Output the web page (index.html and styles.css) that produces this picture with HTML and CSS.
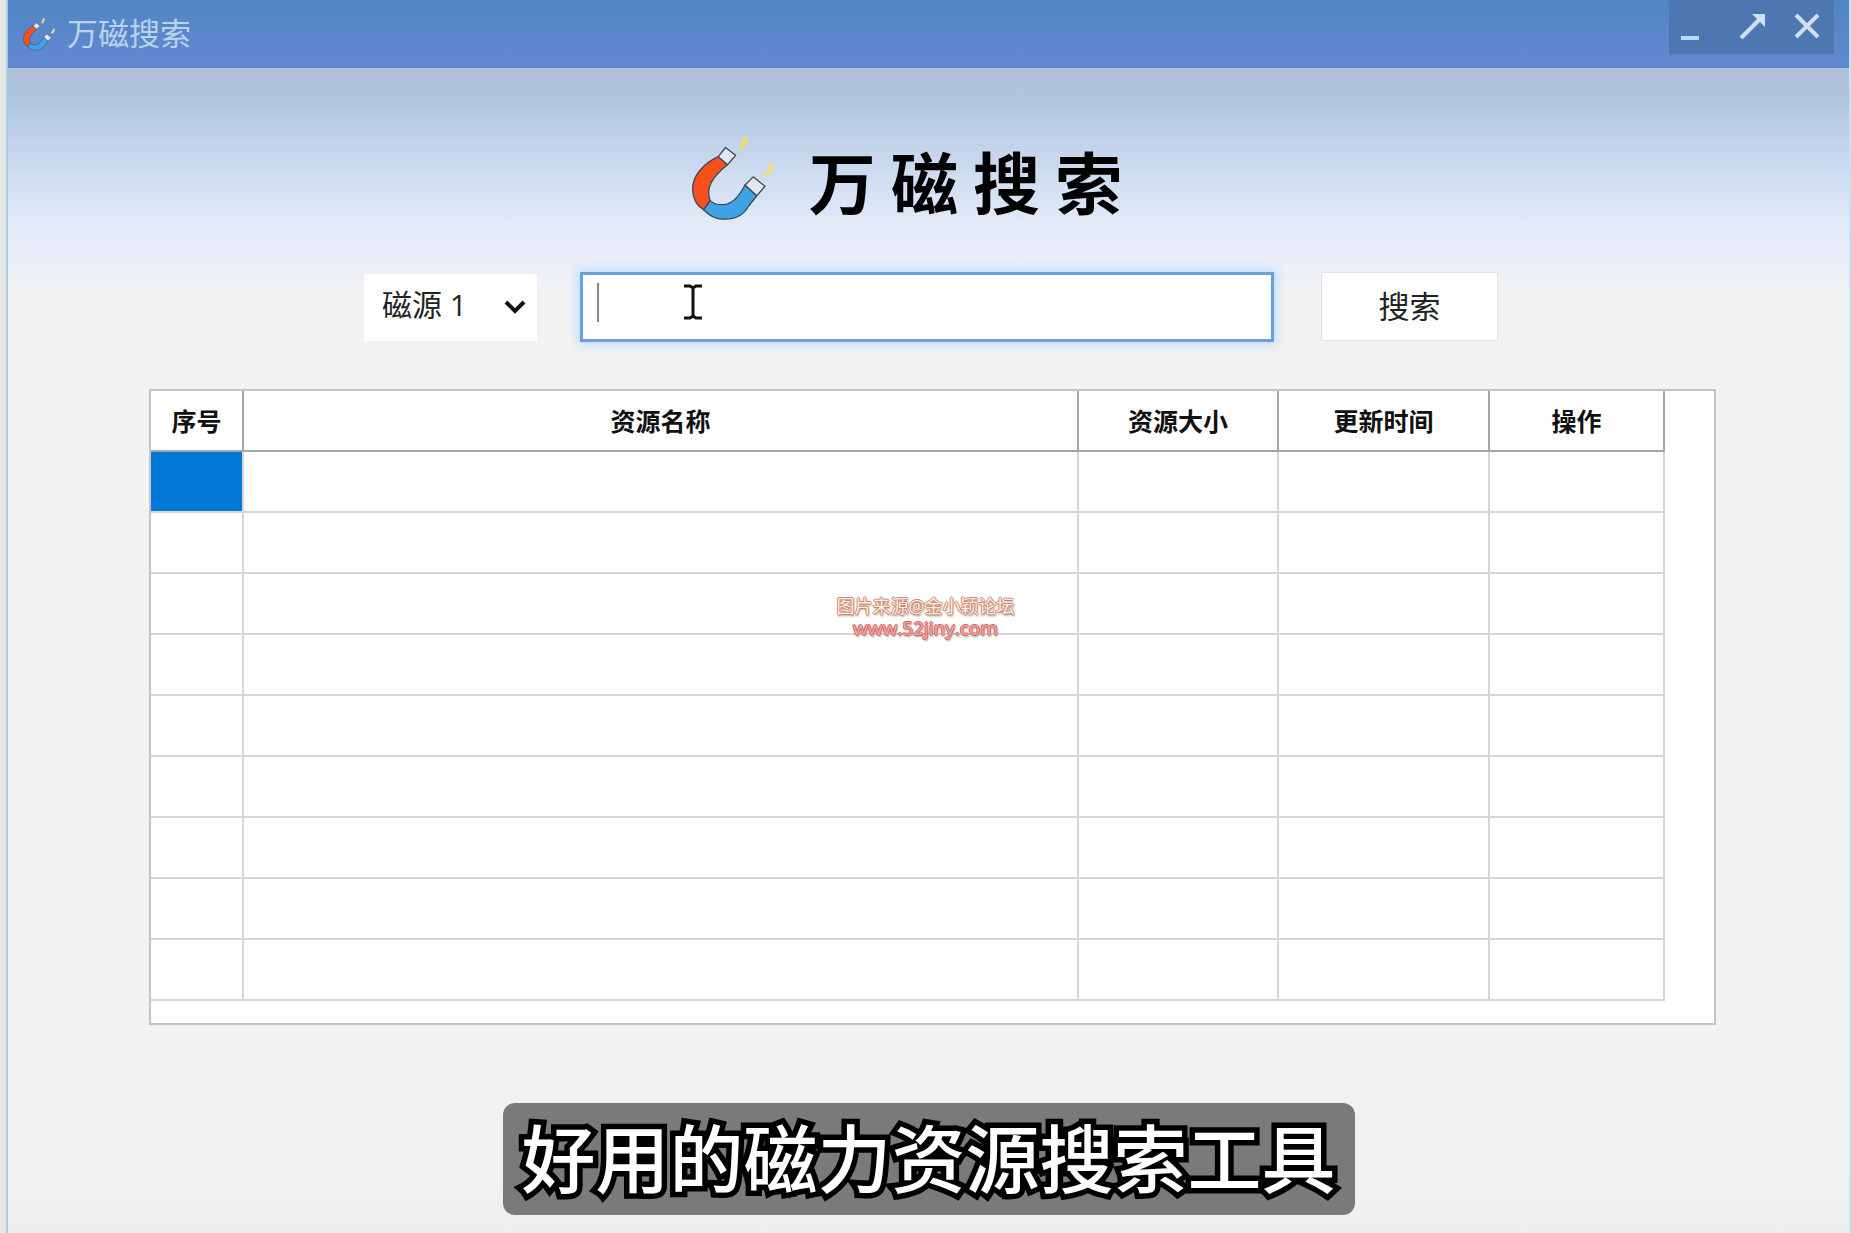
FILE: index.html
```html
<!DOCTYPE html>
<html lang="zh-CN">

<head>
    <meta charset="UTF-8">
    <title>万磁搜索</title>
    <link rel="stylesheet" href="styles.css">
</head>

<body>
    <svg width="0" height="0" class="defs" aria-hidden="true">
        <symbol id="magnet" viewBox="60 30 270 275">
            <g stroke="#3c4656" stroke-width="4" stroke-linejoin="round">
                <path fill="#f4511e" d="M150 105C105 125 70 165 71 205C72 235 86 257 105 268L125 240C112 205 125 172 178 130Z" />
                <path fill="#3fa2e4" d="M105 268C125 290 145 297 165 297C205 298 230 280 242 258L268 225L232 192C215 225 195 249 168 252C150 254 136 250 125 240Z" />
                <path fill="#e3e7ef" d="M150 105L172 77L203 101L178 130Z" />
                <path fill="#e3e7ef" d="M232 192L257 167L293 196L268 225Z" />
            </g>
            <path fill="#e9da78" d="M230 40L244 50L236 66L228 84L212 78L220 60Z" />
            <path fill="#e9e08c" d="M312 120L322 132L314 156L296 168L290 156L302 142Z" />
        </symbol>
    </svg>

    <div class="window">
        <header class="titlebar">
            <svg class="titlebar-icon" aria-hidden="true"><use href="#magnet" /></svg>
            <span class="titlebar-text">万磁搜索</span>
            <div class="window-buttons">
                <button type="button" aria-label="最小化">
                    <svg width="32" height="28" viewBox="0 0 32 28"><path d="M0 26H18" stroke="#b9dbef" stroke-width="4" /></svg>
                </button>
                <button type="button" aria-label="最大化">
                    <svg width="28" height="28" viewBox="0 0 28 28"><path d="M3 26L21 8" stroke="#cfe0ec" stroke-width="4" /><path d="M14 2H27V15Z" fill="#cfe0ec" /></svg>
                </button>
                <button type="button" aria-label="关闭">
                    <svg width="28" height="28" viewBox="0 0 28 28"><path d="M3 3L25 25M25 3L3 25" stroke="#cfe0ec" stroke-width="4" /></svg>
                </button>
            </div>
        </header>

        <main class="content">
            <div class="brand">
                <svg class="brand-icon" aria-hidden="true"><use href="#magnet" /></svg>
                <h1>万 磁 搜 索</h1>
            </div>

            <form class="search">
                <div class="source">
                    <select id="source" aria-label="磁源">
                        <option>磁源 1</option>
                    </select>
                    <svg class="arrow" viewBox="0 0 22 14"><path d="M2 2L11 11L20 2" fill="none" stroke="#111" stroke-width="4" /></svg>
                </div>
                <div class="keyword">
                    <input type="text" id="keyword" aria-label="关键词">
                    <span class="caret"></span>
                    <svg class="pointer" viewBox="0 0 20 36"><path d="M1 2H7L10 4L13 2H19M1 34H7L10 32L13 34H19M10 4V32" fill="none" stroke="#111" stroke-width="3" /></svg>
                </div>
                <button type="button" class="search-button">搜索</button>
            </form>

            <div class="panel">
                <table>
                    <thead>
                        <tr>
                            <th class="col-no">序号</th>
                            <th>资源名称</th>
                            <th class="col-size">资源大小</th>
                            <th class="col-time">更新时间</th>
                            <th class="col-action">操作</th>
                        </tr>
                    </thead>
                    <tbody>
                        <tr><td class="selected"></td><td></td><td></td><td></td><td></td></tr>
                        <tr><td></td><td></td><td></td><td></td><td></td></tr>
                        <tr><td></td><td></td><td></td><td></td><td></td></tr>
                        <tr><td></td><td></td><td></td><td></td><td></td></tr>
                        <tr><td></td><td></td><td></td><td></td><td></td></tr>
                        <tr><td></td><td></td><td></td><td></td><td></td></tr>
                        <tr><td></td><td></td><td></td><td></td><td></td></tr>
                        <tr><td></td><td></td><td></td><td></td><td></td></tr>
                        <tr><td></td><td></td><td></td><td></td><td></td></tr>
                    </tbody>
                </table>
            </div>
        </main>

        <div class="caption">好用的磁力资源搜索工具</div>
    </div>

    <div class="watermark">
        <div class="watermark-name">图片来源@金小颖论坛</div>
        <div class="watermark-site">www.52jiny.com</div>
    </div>
</body>

</html>
```

FILE: styles.css
```css
* {
    box-sizing: border-box;
}

body {
    margin: 0;
    min-height: 100vh;
    padding-left: 6px;
    position: relative;
    background-color: #e6e8e6;
    font-family: "Noto Sans CJK SC", sans-serif;
    color: #111;
}

.defs {
    position: absolute;
}

.window {
    position: relative;
    min-height: 100vh;
    background: linear-gradient(#f2f2f2 95%, #eeeeee);
    border-left: 2px solid #a9cfe6;
    border-right: 2px solid #bfe6f5;
}

.titlebar {
    display: flex;
    align-items: flex-start;
    height: 68px;
    padding: 0 15px 0 14px;
    background: linear-gradient(#4f86c0, #5a87cb 50%, #6288d2);
}

.titlebar-icon {
    width: 34px;
    height: 36px;
    margin-top: 16px;
}

.titlebar-text {
    margin-left: 11px;
    font-size: 31px;
    line-height: 64px;
    color: #b9d3ea;
}

.window-buttons {
    display: flex;
    height: 54px;
    margin-left: auto;
    background-color: #4c77b1;
}

.window-buttons button {
    width: 55px;
    padding: 0;
    border: none;
    background: none;
}

.content {
    padding: 64px 133px 0 141px;
    background: linear-gradient(#b2c0da, #b0c6de 32px, #c9d8ef 94px, #e4ebf8 160px, #eaeefa 190px, #f2f2f2 225px, transparent 226px);
}

.brand {
    display: flex;
    justify-content: center;
    align-items: center;
    height: 90px;
    padding-right: 54px;
}

.brand-icon {
    width: 88px;
    height: 90px;
    margin-right: 32px;
}

h1 {
    margin: 0;
    padding-top: 6px;
    font-size: 67px;
    line-height: 90px;
    font-weight: 700;
    color: #000;
}

.search {
    display: flex;
    margin-top: 50px;
    padding: 0 218px 0 215px;
}

.source {
    position: relative;
    width: 173px;
    margin-right: 43px;
    padding: 2px 0;
}

select {
    width: 100%;
    height: 67px;
    padding: 0 18px 6px;
    border: none;
    appearance: none;
    background-color: #fff;
    font-family: "Open Sans", "Noto Sans CJK SC", sans-serif;
    font-size: 30px;
    color: #222;
}

.arrow {
    position: absolute;
    top: 28px;
    right: 11px;
    width: 22px;
    height: 14px;
    pointer-events: none;
}

.keyword {
    position: relative;
    flex: 1;
}

#keyword {
    width: 100%;
    height: 70px;
    padding: 0 16px;
    border: 3px solid #6c9ddf;
    background-color: #fff;
    box-shadow: 0 0 10px 2px #b5dafa;
    font: inherit;
    font-size: 30px;
    outline: none;
}

.caret {
    position: absolute;
    top: 11px;
    left: 17px;
    width: 2px;
    height: 39px;
    background-color: #888;
}

.pointer {
    position: absolute;
    top: 12px;
    left: 103px;
    width: 20px;
    height: 36px;
}

.search-button {
    width: 177px;
    height: 69px;
    margin-left: 47px;
    padding: 0 0 4px;
    border: 1px solid #e4e4e4;
    background-color: #fff;
    font: inherit;
    font-size: 31px;
    color: #222;
}

.panel {
    margin-top: 46px;
    padding: 0 49px 22px 0;
    border: 2px solid #c4c4c4;
    background-color: #fff;
}

table {
    width: 100%;
    table-layout: fixed;
    border-collapse: separate;
    border-spacing: 0;
}

th,
td {
    height: 61px;
    padding: 0;
    border-right: 2px solid #d6d6d6;
    border-bottom: 2px solid #d6d6d6;
}

th {
    padding-bottom: 2px;
    border-color: #a6a6a6;
    font-size: 25px;
    line-height: 36px;
}

.col-no {
    width: 93px;
}

.col-size {
    width: 200px;
}

.col-time {
    width: 211px;
}

.col-action {
    width: 175px;
}

.selected {
    background-color: #0078d7;
}

.watermark {
    position: absolute;
    top: 50%;
    left: 50%;
    transform: translate(-50%, -50%);
    text-align: center;
    line-height: 22px;
    pointer-events: none;
}

.watermark-name {
    font-family: "Open Sans", "Noto Sans CJK SC", sans-serif;
    font-size: 18px;
    color: #fff0dc;
    text-shadow: 1px 0 #cf8578, -1px 0 #cf8578, 0 1px #cf8578, 0 -1px #cf8578, 1px 2px 2px #999;
}

.watermark-site {
    font-family: "Open Sans", sans-serif;
    font-size: 19px;
    color: #f0a8a0;
    text-shadow: 1px 0 #d4665f, -1px 0 #d4665f, 0 1px #d4665f, 0 -1px #d4665f, 1px 2px 2px #999;
}

.caption {
    position: absolute;
    bottom: 18px;
    left: 50%;
    transform: translateX(-50%);
    padding: 0 19px 8px;
    border-radius: 12px;
    background-color: #7a7a7a;
    font-size: 74px;
    line-height: 104px;
    font-weight: 500;
    white-space: nowrap;
    color: #fff;
    -webkit-text-stroke: 11px #000;
    stroke-linejoin: round;
    paint-order: stroke fill;
}
```
